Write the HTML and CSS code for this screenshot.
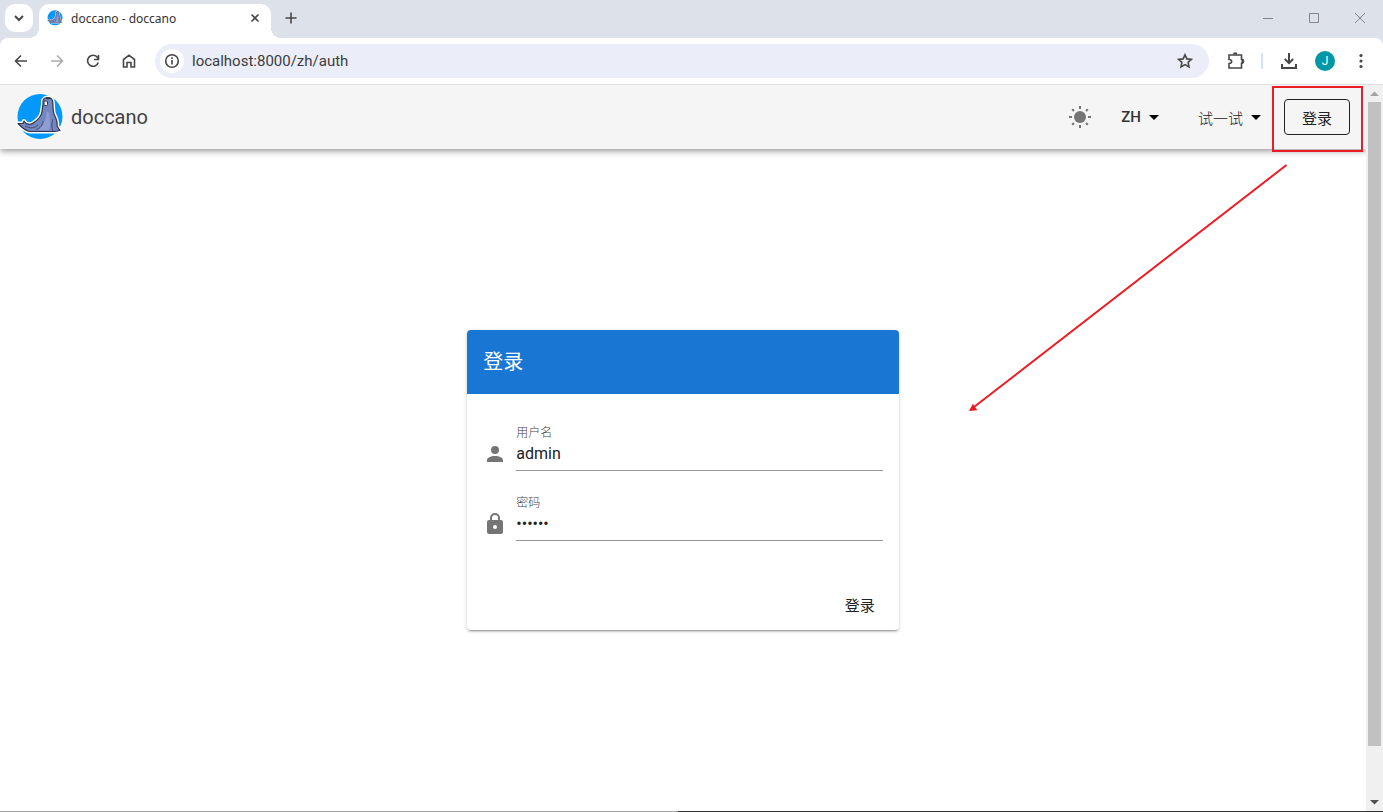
FILE: index.html
```
<!DOCTYPE html>
<html lang="zh">
<head>
<meta charset="utf-8">
<title>doccano - doccano</title>
<link rel="stylesheet" href="styles.css">
</head>
<body>
<svg class="defs" aria-hidden="true">
  <symbol id="seal" viewBox="0 0 48 48">
    <circle cx="24" cy="23.500" r="22.500" fill="#0398fc"/>
    <path id="seal-body" d="M27 8.500C27 3.500 35.500 3 36.500 8C37.500 12 36.500 16 38 21C40 25 42 29 41 33L44 37.500L39 38.500H14C9 38 6.500 35 2 30.500L7 30.500L8 28C10 31.500 14 32.500 18 29.500C23 26 25.500 23 26 18.500C26 15.500 27.500 12 27 8.500Z" fill="#fff" stroke="#fff" stroke-width="4" stroke-linejoin="round"/>
    <path d="M27 8.500C27 3.500 35.500 3 36.500 8C37.500 12 36.500 16 38 21C40 25 42 29 41 33L44 37.500L39 38.500H14C9 38 6.500 35 2 30.500L7 30.500L8 28C10 31.500 14 32.500 18 29.500C23 26 25.500 23 26 18.500C26 15.500 27.500 12 27 8.500Z" fill="#7386bf" stroke="#303448" stroke-width="1.200" stroke-linejoin="round"/>
    <path d="M30 18C32 26 27 31 23 37H33C35 32 34 26 33 20Z" fill="#8f9dd0"/>
    <path d="M37 26C36 30 35 33 37 38M27 28C27 32 24 35 20 37M9 33C14 36 19 35 22 32" fill="none" stroke="#454d76" stroke-width="1"/>
    <rect x="28" y="8" width="3.500" height="4.500" rx="1" fill="#e9ebef" stroke="#303448"/>
    <path d="M30 5.200L34.500 5.500" stroke="#303448" stroke-width="1.600"/>
  </symbol>
</svg>

<header class="browser">
  <div class="tabstrip">
    <button class="tab-search" aria-label="Search tabs"><svg width="12" height="12" viewBox="0 0 12 12"><path class="line bold" d="M2 4L6 8L10 4"/></svg></button>
    <div class="tab">
      <svg width="16" height="16"><use href="#seal"/></svg>
      <span class="tab-title">doccano - doccano</span>
      <button class="plain tab-close" aria-label="Close tab"><svg width="10" height="10" viewBox="0 0 10 10"><path class="line" d="M1.500 1.500L8.500 8.500M8.500 1.500L1.500 8.500"/></svg></button>
    </div>
    <button class="plain new-tab" aria-label="New tab"><svg width="12" height="12" viewBox="0 0 12 12"><path class="line" d="M6 .5V11.500M.5 6H11.500"/></svg></button>
    <div class="window-controls">
      <button class="plain" aria-label="Minimize"><svg width="12" height="12" viewBox="0 0 12 12"><path d="M1 6.500H11"/></svg></button>
      <button class="plain" aria-label="Maximize"><svg width="12" height="12" viewBox="0 0 12 12"><path d="M1.500 1.500H10.500V10.500H1.500Z"/></svg></button>
      <button class="plain" aria-label="Close"><svg width="12" height="12" viewBox="0 0 12 12"><path d="M1 1L11 11M11 1L1 11"/></svg></button>
    </div>
  </div>
  <div class="toolbar">
    <nav class="nav-buttons">
      <button class="plain tool" aria-label="Back"><svg width="14" height="14" viewBox="0 0 14 14"><path class="line" d="M13 7H2M7 1.500L1.500 7L7 12.500"/></svg></button>
      <button class="plain tool faded" aria-label="Forward"><svg width="14" height="14" viewBox="0 0 14 14"><path class="line" d="M1 7H12M7 1.500L12.500 7L7 12.500"/></svg></button>
      <button class="plain tool" aria-label="Reload"><svg width="14" height="14" viewBox="0 0 14 14"><path class="line" d="M12.300 8.500A5.500 5.500 0 1 1 11.500 3.500L12.500 5M12.500 1V5.500H8"/></svg></button>
      <button class="plain tool" aria-label="Home"><svg width="14" height="14" viewBox="0 0 14 14"><path class="line" d="M1.500 5.500L7 1.200L12.500 5.500V13H9V8.500H5V13H1.500Z"/></svg></button>
    </nav>
    <div class="omnibox">
      <button class="plain site-info" aria-label="Site information"><svg width="16" height="16" viewBox="0 0 16 16"><circle class="line" cx="8" cy="8" r="6.300"/><path class="line" d="M8 7V11.500M8 4.300V6"/></svg></button>
      <input class="url" aria-label="Address" type="text" value="localhost:8000/zh/auth">
      <button class="plain tool" aria-label="Bookmark"><svg width="16" height="16" viewBox="0 0 16 16"><path class="line" d="M8 1.800L9.900 5.900L14.400 6.400L11.100 9.400L12 13.900L8 11.600L4 13.900L4.900 9.400L1.600 6.400L6.100 5.900Z"/></svg></button>
    </div>
    <div class="actions">
      <button class="plain tool" aria-label="Extensions"><svg width="18" height="18" viewBox="0 0 18 18"><path class="line" d="M2 3H14.500V7.200A2 2 0 0 1 14.500 11.200V16H2V11.500C5.500 11.500 5.500 7.500 2 7.500Z"/><path class="solid" d="M6 2.500A2.200 2.200 0 0 1 10.400 2.500ZM14.500 7A2.200 2.200 0 0 1 14.500 11.400Z"/></svg></button>
      <span class="divider"></span>
      <button class="plain tool" aria-label="Downloads"><svg width="18" height="18" viewBox="0 0 18 18"><path class="line bold" d="M9 1V11M4.800 7L9 11.200L13.200 7M2 12V16H16V12"/></svg></button>
      <button class="plain tool" aria-label="Profile"><span class="avatar">J</span></button>
      <button class="plain tool" aria-label="Menu"><svg width="16" height="16" viewBox="0 0 16 16"><g class="solid"><circle cx="8" cy="2.500" r="1.600"/><circle cx="8" cy="8" r="1.600"/><circle cx="8" cy="13.500" r="1.600"/></g></svg></button>
    </div>
  </div>
</header>

<div class="viewport">
  <div class="page">
    <header class="app-bar">
      <a class="brand" href="#"><svg width="48" height="48"><use href="#seal"/></svg><span>doccano</span></a>
      <button class="plain theme" aria-label="Theme"><svg width="24" height="24" viewBox="0 0 24 24"><circle cx="12" cy="12" r="6" fill="#757575"/><path d="M12 1V4M12 20V23M1 12H4M20 12H23M4.200 4.200L6 6M18 18L19.800 19.800M4.200 19.800L6 18M18 6L19.800 4.200" stroke="#757575" stroke-width="2"/></svg></button>
      <button class="plain menu latin">ZH<svg width="24" height="24" viewBox="0 0 24 24"><path d="M7 10L12 15L17 10Z"/></svg></button>
      <button class="plain menu">试一试<svg width="24" height="24" viewBox="0 0 24 24"><path d="M7 10L12 15L17 10Z"/></svg></button>
      <div class="marked"><button class="outlined">登录</button></div>
    </header>
    <main class="content">
      <form class="card">
        <h1 class="card-title">登录</h1>
        <div class="card-body">
          <div class="field">
            <svg width="24" height="24" viewBox="0 0 24 24"><path d="M12 4A4 4 0 0 1 16 8A4 4 0 0 1 12 12A4 4 0 0 1 8 8A4 4 0 0 1 12 4M12 14C16.420 14 20 15.790 20 18V20H4V18C4 15.790 7.580 14 12 14Z"/></svg>
            <div class="control"><label for="username">用户名</label><input id="username" type="text" value="admin"></div>
          </div>
          <div class="field">
            <svg width="24" height="24" viewBox="0 0 24 24"><path d="M12 17A2 2 0 0 0 14 15C14 13.890 13.100 13 12 13A2 2 0 0 0 10 15A2 2 0 0 0 12 17M18 8A2 2 0 0 1 20 10V20A2 2 0 0 1 18 22H6A2 2 0 0 1 4 20V10C4 8.890 4.900 8 6 8H7V6A5 5 0 0 1 12 1A5 5 0 0 1 17 6V8H18M12 3A3 3 0 0 0 9 6V8H15V6A3 3 0 0 0 12 3Z"/></svg>
            <div class="control"><label for="password">密码</label><input id="password" type="password" value="secret"></div>
          </div>
        </div>
        <div class="card-actions"><button class="plain submit" type="button">登录</button></div>
      </form>
    </main>
  </div>
  <div class="scrollbar" aria-hidden="true">
    <svg width="17" height="17" viewBox="0 0 17 17"><path d="M4 11L8.500 6.500L13 11Z" fill="#a3a3a3"/></svg>
    <div class="track"><div class="thumb"></div></div>
    <svg width="17" height="17" viewBox="0 0 17 17"><path d="M4 6L8.500 10.500L13 6Z" fill="#505050"/></svg>
  </div>
</div>
<div class="desktop-edge"><span></span><span class="dark"></span></div>

<svg class="arrow" width="320" height="250" viewBox="0 0 320 250" aria-hidden="true"><path d="M318.500 1L6 243" stroke="#ed1c24" stroke-width="2"/><path d="M1 247L5 239.500L6.500 242.500L9.500 246.300Z" fill="#ed1c24"/></svg>
</body>
</html>
```
FILE: styles.css
```
* { box-sizing: border-box; }

body {
  margin: 0;
  height: 100vh;
  display: flex;
  flex-direction: column;
  position: relative;
  overflow: hidden;
  background: #fff;
  color: #212121;
  font-family: Roboto, "Noto Sans CJK SC", sans-serif;
  font-size: 16px;
}

svg { display: block; flex: none; }
button, input { font: inherit; color: inherit; }
input { border: 0; outline: 0; padding: 0; background: none; min-width: 0; }

.defs { position: absolute; width: 0; height: 0; }
.line { fill: none; stroke: #474747; stroke-width: 1.6; }
.bold { stroke-width: 2; }
.solid { fill: #474747; }

.plain {
  display: flex;
  align-items: center;
  justify-content: center;
  border: 0;
  padding: 0;
  background: none;
}

/* Browser window */
.browser { background: #dde1e9; border-bottom: 1px solid #dfdfe0; }
.tabstrip { display: flex; height: 38px; padding: 4px 0 0 5px; }
.tab-search {
  display: flex;
  align-items: center;
  justify-content: center;
  width: 28px;
  height: 28px;
  margin-right: 6px;
  padding: 0;
  border: 0;
  border-radius: 10px;
  background: #fff;
}
.tab {
  position: relative;
  display: flex;
  align-items: center;
  width: 232px;
  padding: 0 8px 6px;
  border-radius: 10px 10px 0 0;
  background: #fff;
}
.tab::before, .tab::after {
  content: "";
  position: absolute;
  bottom: 0;
  width: 10px;
  height: 10px;
}
.tab::before { right: 100%; background: radial-gradient(circle at 0 0, transparent 10px, #fff 10px); }
.tab::after { left: 100%; background: radial-gradient(circle at 100% 0, transparent 10px, #fff 10px); }
.tab-title {
  flex: 1;
  margin-left: 8px;
  color: #333;
  font-family: "Noto Sans", sans-serif;
  font-size: 12px;
}
.tab-close { width: 16px; height: 16px; }
.new-tab { width: 28px; height: 28px; margin-left: 6px; }
.window-controls { display: flex; margin-left: auto; }
.window-controls button { width: 46px; height: 28px; }
.window-controls path { fill: none; stroke: #858589; }

.toolbar {
  display: flex;
  align-items: center;
  height: 46px;
  padding: 0 8px 0 7px;
  border-radius: 8px 8px 0 0;
  background: #fff;
}
.nav-buttons { display: flex; gap: 8px; }
.tool { width: 28px; height: 28px; }
.faded { opacity: 0.45; }
.omnibox {
  flex: 1;
  display: flex;
  align-items: center;
  height: 34px;
  margin: 0 13px 0 12px;
  padding: 0 10px 0 5px;
  border-radius: 17px;
  background: #ebeef8;
}
.site-info { width: 24px; height: 24px; border-radius: 12px; background: #fff; }
.url {
  flex: 1;
  margin-left: 8px;
  color: #3c3c40;
  font-size: 15px;
}
.actions { display: flex; align-items: center; gap: 8px; }
.divider { width: 2px; height: 16px; margin: 0 4px 0 3px; background: #d3e3fd; }
.avatar {
  width: 20px;
  height: 20px;
  border-radius: 10px;
  background: #0097a7;
  color: #fff;
  font-size: 12px;
  line-height: 20px;
}

/* Page */
.viewport { flex: 1; display: flex; min-height: 0; }
.page { flex: 1; display: flex; flex-direction: column; }
.app-bar {
  display: flex;
  align-items: center;
  height: 64px;
  padding: 0 16px;
  background: #f5f5f5;
  box-shadow: 0 2px 4px -1px rgba(0, 0, 0, .2), 0 4px 5px rgba(0, 0, 0, .14), 0 1px 10px rgba(0, 0, 0, .12);
  clip-path: inset(0 0 -16px 0);
}
.brand {
  display: flex;
  align-items: center;
  gap: 7px;
  margin-right: auto;
  color: #424242;
  font-size: 20px;
  text-decoration: none;
}
.theme { width: 36px; height: 36px; margin-right: 7px; }
.menu { height: 36px; padding: 0 16px; gap: 1px; font-size: 15px; font-weight: 300; }
.latin { color: #333; font-weight: 500; }
.marked { position: relative; }
.marked::after {
  content: "";
  position: absolute;
  inset: -13px -13px -17px -12px;
  border: 2px solid #ed1c24;
  pointer-events: none;
}
.outlined {
  display: block;
  width: 66px;
  height: 36px;
  padding: 0;
  border: 1px solid #212121;
  border-radius: 4px;
  background: none;
  font-size: 15px;
}

.content { flex: 1; display: flex; align-items: center; justify-content: center; }
.card {
  width: calc(100% / 3 - 24px);
  border-radius: 4px;
  background: #fff;
  box-shadow: 0 3px 1px -2px rgba(0, 0, 0, .2), 0 2px 2px rgba(0, 0, 0, .14), 0 1px 5px rgba(0, 0, 0, .12);
}
.card-title {
  margin: 0;
  padding: 16px;
  border-radius: 4px 4px 0 0;
  background: #1976d2;
  color: #fff;
  font-size: 20px;
  font-weight: 400;
  line-height: 32px;
}
.card-body {
  display: flex;
  flex-direction: column;
  gap: 26px;
  padding: 33px 16px 37px;
}
.field { display: flex; align-items: flex-end; gap: 9px; }
.field > svg { margin-bottom: 5px; fill: #757575; }
.control { flex: 1; display: flex; flex-direction: column; }
.control label { color: #444; font-size: 12px; font-weight: 300; line-height: 12px; }
.control input { height: 32px; padding-bottom: 2px; border-bottom: 1px solid #949494; }
.card-actions { display: flex; justify-content: flex-end; padding: 8px; }
.submit { height: 36px; padding: 0 16px; font-size: 15px; }

.scrollbar { display: flex; flex-direction: column; width: 17px; background: #f0f0f0; }
.track { flex: 1; padding: 0 2px; }
.thumb { height: 93%; background: #c1c1c1; }
.desktop-edge { display: flex; height: 1px; }
.desktop-edge span { flex: 49; background: #a0a0a0; }
.desktop-edge .dark { flex: 51; background: #333; }

.arrow { position: absolute; top: 164px; right: 95px; pointer-events: none; }
```
